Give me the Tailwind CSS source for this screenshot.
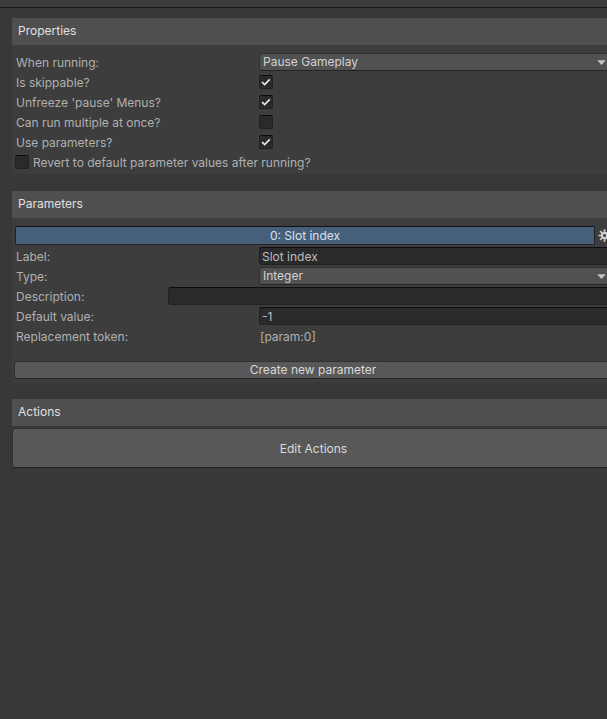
<!DOCTYPE html>
<html lang="en">
<head>
    <meta charset="UTF-8">
    <meta name="viewport" content="width=device-width, initial-scale=1.0">
    <script src="https://cdn.jsdelivr.net/npm/@tailwindcss/browser@4"></script>
    <title>ActionList Inspector</title>
</head>
<body class="min-h-screen overflow-x-hidden bg-[#383838] font-['Inter',sans-serif] text-[12px] leading-[17px] text-[#b0b0b0]">
    <div class="h-2 border-b border-[#191919] bg-[#3c3c3c]"></div>
    <!-- the panels run a little past the right edge of the window -->
    <main class="ml-3 -mr-2 mt-[10px] flex flex-col gap-[17px]">
        <section class="bg-[#3d3d3d]">
            <h2 class="flex h-[27px] items-center bg-[#4f4f4f] px-[6px] pb-[2px] text-[#e0e0e0]">Properties</h2>
            <div class="pt-[7px] pb-[2px] pl-1 pr-[5px]">
                <div class="flex h-5 items-center">
                    <label for="running" class="w-[243px] shrink-0">When running:</label>
                    <div class="relative flex-1">
                        <select id="running" class="block h-[18px] w-full appearance-none rounded-[3px] border border-[#303030] border-b-[#242424] bg-[#515151] px-[3px] leading-4 text-[#d2d2d2]">
                            <option>Pause Gameplay</option>
                        </select>
                        <svg class="pointer-events-none absolute right-1 top-[7px] h-[5px] w-[9px]" viewBox="0 0 9 5"><path d="M0.2 0.2h8.6L4.5 5z" fill="#c4c4c4"/></svg>
                    </div>
                </div>
                <div class="flex h-5 items-center">
                    <label for="skippable" class="w-[243px] shrink-0">Is skippable?</label>
                    <span class="relative size-[14px]">
                        <input id="skippable" type="checkbox" checked class="peer block size-[14px] appearance-none rounded-[2px] border border-[#212121] border-t-[#0d0d0d] bg-[#2a2a2a]">
                        <svg class="pointer-events-none absolute inset-0 hidden peer-checked:block" viewBox="0 0 14 14" fill="none"><path d="M3 7l2.6 2.6 5.2-5.2" stroke="#ececec" stroke-width="1.6"/></svg>
                    </span>
                </div>
                <div class="flex h-5 items-center">
                    <label for="unfreeze" class="w-[243px] shrink-0">Unfreeze 'pause' Menus?</label>
                    <span class="relative size-[14px]">
                        <input id="unfreeze" type="checkbox" checked class="peer block size-[14px] appearance-none rounded-[2px] border border-[#212121] border-t-[#0d0d0d] bg-[#2a2a2a]">
                        <svg class="pointer-events-none absolute inset-0 hidden peer-checked:block" viewBox="0 0 14 14" fill="none"><path d="M3 7l2.6 2.6 5.2-5.2" stroke="#ececec" stroke-width="1.6"/></svg>
                    </span>
                </div>
                <div class="flex h-5 items-center">
                    <label for="multiple" class="w-[243px] shrink-0">Can run multiple at once?</label>
                    <span class="relative size-[14px]">
                        <input id="multiple" type="checkbox" class="peer block size-[14px] appearance-none rounded-[2px] border border-[#212121] border-t-[#0d0d0d] bg-[#2a2a2a]">
                        <svg class="pointer-events-none absolute inset-0 hidden peer-checked:block" viewBox="0 0 14 14" fill="none"><path d="M3 7l2.6 2.6 5.2-5.2" stroke="#ececec" stroke-width="1.6"/></svg>
                    </span>
                </div>
                <div class="flex h-5 items-center">
                    <label for="params" class="w-[243px] shrink-0">Use parameters?</label>
                    <span class="relative size-[14px]">
                        <input id="params" type="checkbox" checked class="peer block size-[14px] appearance-none rounded-[2px] border border-[#212121] border-t-[#0d0d0d] bg-[#2a2a2a]">
                        <svg class="pointer-events-none absolute inset-0 hidden peer-checked:block" viewBox="0 0 14 14" fill="none"><path d="M3 7l2.6 2.6 5.2-5.2" stroke="#ececec" stroke-width="1.6"/></svg>
                    </span>
                </div>
                <div class="-ml-px flex h-5 items-center gap-1">
                    <span class="relative size-[14px]">
                        <input id="revert" type="checkbox" class="peer block size-[14px] appearance-none rounded-[2px] border border-[#212121] border-t-[#0d0d0d] bg-[#2a2a2a]">
                        <svg class="pointer-events-none absolute inset-0 hidden peer-checked:block" viewBox="0 0 14 14" fill="none"><path d="M3 7l2.6 2.6 5.2-5.2" stroke="#ececec" stroke-width="1.6"/></svg>
                    </span>
                    <label for="revert">Revert to default parameter values after running?</label>
                </div>
            </div>
        </section>

        <section class="bg-[#3d3d3d]">
            <h2 class="flex h-[27px] items-center bg-[#4f4f4f] px-[6px] pb-[2px] text-[#e0e0e0]">Parameters</h2>
            <div class="pt-2 pb-[3px] pl-1 pr-[5px]">
                <div class="-mx-px flex items-center gap-[3px]">
                    <button class="h-[19px] flex-1 rounded-[2px] border border-[#222] border-t-[#111] bg-[#46607c] text-[#dce2e8]">0: Slot index</button>
                    <button aria-label="Parameter options" class="size-[13px]">
                        <svg viewBox="0 0 13 13" fill="none" stroke="#cdcdcd">
                            <circle cx="6.5" cy="6.5" r="2.7" stroke-width="2.4"/>
                            <path d="M6.5 0.3v2.5M6.5 10.2v2.5M0.3 6.5h2.5M10.2 6.5h2.5M2.1 2.1l1.8 1.8M9.1 9.1l1.8 1.8M2.1 10.9l1.8-1.8M9.1 3.9l1.8-1.8" stroke-width="1.7"/>
                        </svg>
                    </button>
                </div>
                <div class="mt-px flex h-5 items-center">
                    <label for="label" class="w-[243px] shrink-0">Label:</label>
                    <input id="label" type="text" value="Slot index" class="h-[18px] min-w-0 flex-1 rounded-[3px] border border-[#212121] border-t-[#0d0d0d] bg-[#2a2a2a] px-[2px] text-[#bcbcbc]">
                </div>
                <div class="flex h-5 items-center">
                    <label for="type" class="w-[243px] shrink-0">Type:</label>
                    <div class="relative flex-1">
                        <select id="type" class="block h-[18px] w-full appearance-none rounded-[3px] border border-[#303030] border-b-[#242424] bg-[#515151] px-[3px] leading-4 text-[#d2d2d2]">
                            <option>Integer</option>
                        </select>
                        <svg class="pointer-events-none absolute right-1 top-[7px] h-[5px] w-[9px]" viewBox="0 0 9 5"><path d="M0.2 0.2h8.6L4.5 5z" fill="#c4c4c4"/></svg>
                    </div>
                </div>
                <div class="flex h-5 items-center">
                    <label for="description" class="w-[152px] shrink-0">Description:</label>
                    <input id="description" type="text" class="h-[18px] min-w-0 flex-1 rounded-[3px] border border-[#212121] border-t-[#0d0d0d] bg-[#2a2a2a] px-[2px] text-[#bcbcbc]">
                </div>
                <div class="flex h-5 items-center">
                    <label for="default" class="w-[243px] shrink-0">Default value:</label>
                    <input id="default" type="text" value="-1" class="h-[18px] min-w-0 flex-1 rounded-[3px] border border-[#212121] border-t-[#0d0d0d] bg-[#2a2a2a] px-[2px] text-[#bcbcbc]">
                </div>
                <div class="flex h-5 items-center">
                    <span class="w-[243px] shrink-0">Replacement token:</span>
                    <span class="px-px">[param:0]</span>
                </div>
                <button class="-ml-[2px] -mr-[2px] mt-[15px] block h-[18px] w-[calc(100%+4px)] rounded-[3px] border border-[#303030] border-b-[#242424] bg-[#585858] leading-4 text-[#dadada]">Create new parameter</button>
            </div>
        </section>

        <section>
            <h2 class="flex h-[27px] items-center bg-[#4f4f4f] px-[6px] pb-[2px] text-[#e0e0e0]">Actions</h2>
            <button class="mt-[2px] block h-10 w-full rounded-[3px] border border-[#303030] border-b-[#242424] bg-[#585858] text-[#dadada]">Edit Actions</button>
        </section>
    </main>
</body>
</html>
